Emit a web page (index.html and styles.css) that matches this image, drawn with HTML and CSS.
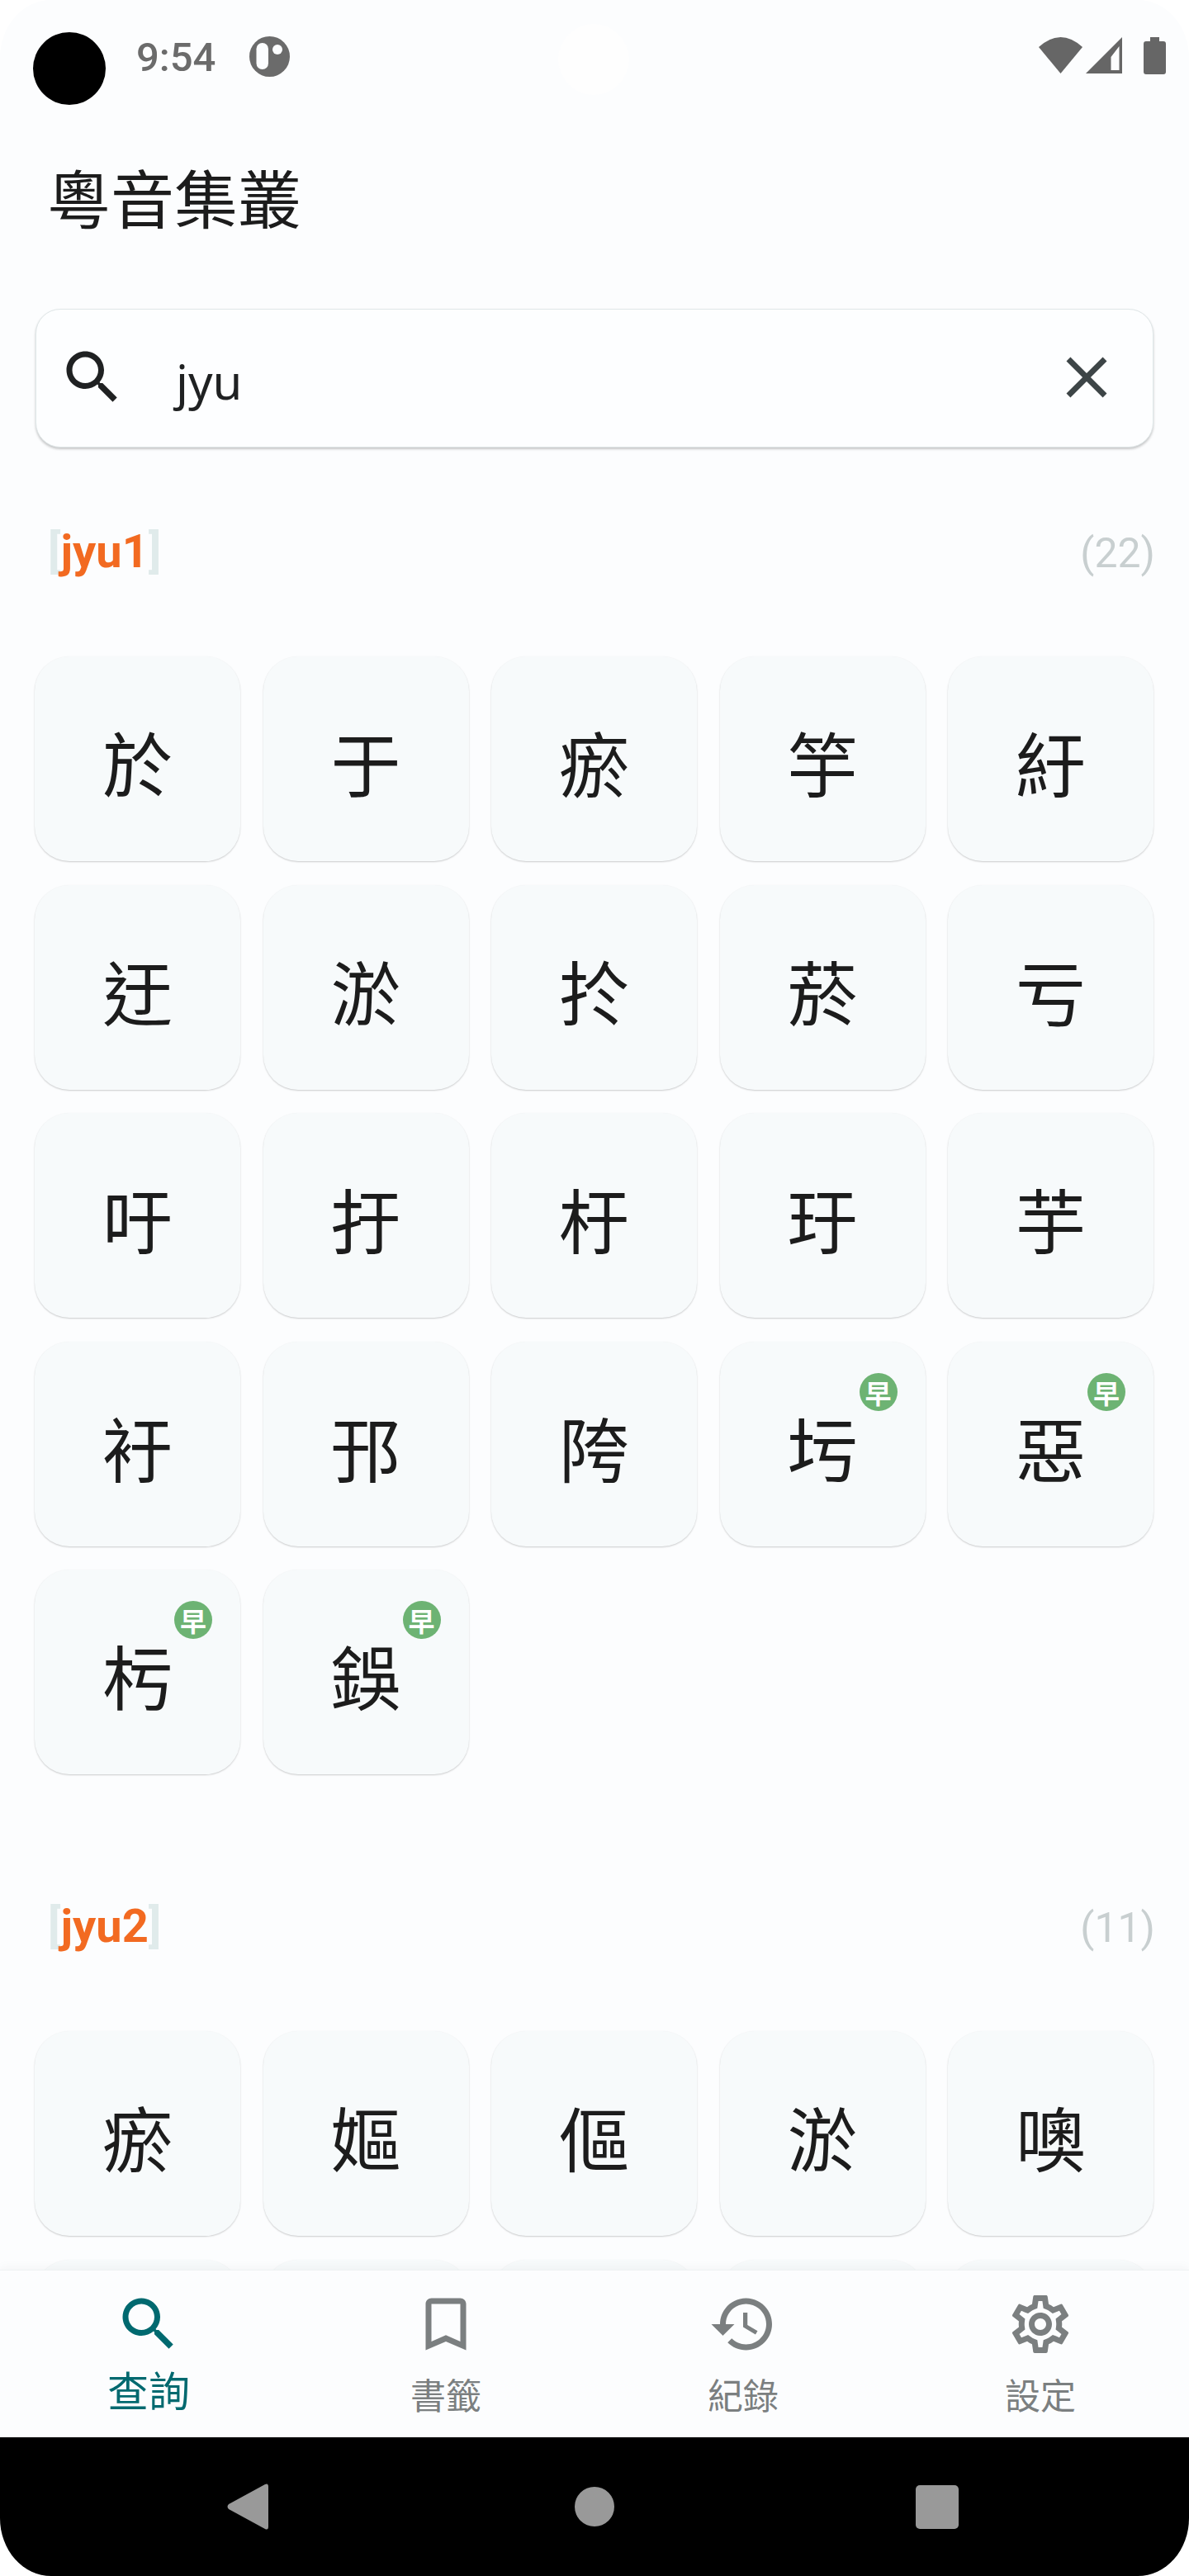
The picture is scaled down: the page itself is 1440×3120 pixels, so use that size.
FILE: index.html
```html
<!DOCTYPE html>
<html>
<head>
	<title>粵音集叢</title>
	<meta charset="utf-8">
	<link rel="stylesheet" href="styles.css">
</head>
<body>
<div id="screen">

	<div class="status">
		<div class="status-hole"></div>
		<span class="status-time">9:54</span>
		<svg class="status-app" width="49" height="49" viewBox="0 0 49 49">
			<circle cx="24.5" cy="24.5" r="24.5" fill="#6b6b6b"/>
			<rect x="8.5" y="8" width="14.5" height="32" rx="7.2" fill="#fcfdff"/>
			<circle cx="34" cy="16" r="6" fill="#fcfdff"/>
		</svg>
		<div class="status-camera"></div>
		<div class="status-right">
			<svg width="53" height="44" viewBox="0 0 53 44"><path d="M0 12Q26.5 -12 53 12L26.5 44Z" fill="#666"/></svg>
			<svg width="44" height="44" viewBox="0 0 44 44"><path fill-rule="evenodd" d="M0 44L44 0V44ZM30.5 40H40.5V11L30.5 24Z" fill="#666"/></svg>
			<svg class="status-battery" width="27" height="45" viewBox="0 0 27 45"><path d="M8 0H19V5H24Q27 5 27 8V42Q27 45 24 45H3Q0 45 0 42V8Q0 5 3 5H8Z" fill="#666"/></svg>
		</div>
	</div>

	<h1>粵音集叢</h1>

	<div class="search">
		<svg class="search-icon" width="84" height="84" viewBox="0 0 24 24"><path d="M15.5 14h-.79l-.28-.27C15.41 12.59 16 11.11 16 9.5 16 5.91 13.09 3 9.5 3S3 5.91 3 9.5 5.91 16 9.5 16c1.61 0 3.09-.59 4.23-1.57l.27.28v.79l5 4.99L20.49 19l-4.99-5zm-6 0C7.01 14 5 11.99 5 9.5S7.01 5 9.5 5 14 7.01 14 9.5 11.99 14 9.5 14z" fill="#1f2122"/></svg>
		<span class="search-text">jyu</span>
		<svg class="search-clear" width="84" height="84" viewBox="0 0 24 24"><path d="M19 6.41L17.59 5 12 10.59 6.41 5 5 6.41 10.59 12 5 17.59 6.41 19 12 13.41 17.59 19 19 17.59 13.41 12z" fill="#3d4547"/></svg>
	</div>

	<div class="results">
		<div class="section">
			<div class="section-head">
				<span class="syllable"><i>[</i>jyu1<i>]</i></span>
				<span class="count">(22)</span>
			</div>
			<div class="grid">
				<div class="card">於</div>
				<div class="card">于</div>
				<div class="card">瘀</div>
				<div class="card">竽</div>
				<div class="card">紆</div>
				<div class="card">迂</div>
				<div class="card">淤</div>
				<div class="card">扵</div>
				<div class="card">菸</div>
				<div class="card">亏</div>
				<div class="card">吁</div>
				<div class="card">扜</div>
				<div class="card">杅</div>
				<div class="card">玗</div>
				<div class="card">芋</div>
				<div class="card">衧</div>
				<div class="card">邘</div>
				<div class="card">陓</div>
				<div class="card">圬<span class="badge">早</span></div>
				<div class="card">惡<span class="badge">早</span></div>
				<div class="card">杇<span class="badge">早</span></div>
				<div class="card">鋘<span class="badge">早</span></div>
			</div>
		</div>

		<div class="section section-next">
			<div class="section-head">
				<span class="syllable"><i>[</i>jyu2<i>]</i></span>
				<span class="count">(11)</span>
			</div>
			<div class="grid">
				<div class="card">瘀</div>
				<div class="card">嫗</div>
				<div class="card">傴</div>
				<div class="card">淤</div>
				<div class="card">噢</div>
				<div class="card"></div>
				<div class="card"></div>
				<div class="card"></div>
				<div class="card"></div>
				<div class="card"></div>
			</div>
		</div>
	</div>

	<div class="nav">
		<div class="nav-item active">
			<svg width="84" height="84" viewBox="0 0 24 24"><path d="M15.5 14h-.79l-.28-.27C15.41 12.59 16 11.11 16 9.5 16 5.91 13.09 3 9.5 3S3 5.91 3 9.5 5.91 16 9.5 16c1.61 0 3.09-.59 4.23-1.57l.27.28v.79l5 4.99L20.49 19l-4.99-5zm-6 0C7.01 14 5 11.99 5 9.5S7.01 5 9.5 5 14 7.01 14 9.5 11.99 14 9.5 14z"/></svg>
			<span>查詢</span>
		</div>
		<div class="nav-item">
			<svg width="84" height="84" viewBox="0 0 24 24"><path d="M17 3H7c-1.1 0-2 .9-2 2v16l7-3 7 3V5c0-1.1-.9-2-2-2zm0 15l-5-2.18L7 18V5h10v13z"/></svg>
			<span>書籤</span>
		</div>
		<div class="nav-item">
			<svg width="84" height="84" viewBox="0 0 24 24"><path d="M13 3c-4.97 0-9 4.03-9 9H1l3.89 3.89.07.14L9 12H6c0-3.87 3.13-7 7-7s7 3.13 7 7-3.13 7-7 7c-1.93 0-3.68-.79-4.94-2.06l-1.42 1.42C8.27 19.99 10.51 21 13 21c4.97 0 9-4.03 9-9s-4.03-9-9-9zm-1 5v5l4.28 2.54.72-1.21-3.5-2.08V8H12z"/></svg>
			<span>紀錄</span>
		</div>
		<div class="nav-item">
			<svg width="84" height="84" viewBox="0 0 24 24"><path d="M19.43 12.98c.04-.32.07-.64.07-.98 0-.34-.03-.66-.07-.98l2.11-1.65c.19-.15.24-.42.12-.64l-2-3.46c-.09-.16-.26-.25-.44-.25-.06 0-.12.01-.17.03l-2.49 1c-.52-.4-1.08-.73-1.69-.98l-.38-2.65C14.46 2.18 14.25 2 14 2h-4c-.25 0-.46.18-.49.42l-.38 2.65c-.61.25-1.17.59-1.69.98l-2.49-1c-.06-.02-.12-.03-.18-.03-.17 0-.34.09-.43.25l-2 3.46c-.13.22-.07.49.12.64l2.11 1.65c-.04.32-.07.65-.07.98 0 .33.03.66.07.98l-2.11 1.65c-.19.15-.24.42-.12.64l2 3.46c.09.16.26.25.44.25.06 0 .12-.01.17-.03l2.49-1c.52.4 1.08.73 1.69.98l.38 2.65c.03.24.24.42.49.42h4c.25 0 .46-.18.49-.42l.38-2.65c.61-.25 1.17-.59 1.69-.98l2.49 1c.06.02.12.03.18.03.17 0 .34-.09.43-.25l2-3.46c.12-.22.07-.49-.12-.64l-2.11-1.65zm-1.98-1.71c.04.31.05.52.05.73 0 .21-.02.43-.05.73l-.14 1.13.89.7 1.08.84-.7 1.21-1.27-.51-1.04-.42-.9.68c-.43.32-.84.56-1.25.73l-1.06.43-.16 1.13-.2 1.35h-1.4l-.19-1.35-.16-1.13-1.06-.43c-.43-.18-.83-.41-1.23-.71l-.91-.7-1.06.43-1.27.51-.7-1.21 1.08-.84.89-.7-.14-1.13c-.03-.31-.05-.54-.05-.74s.02-.43.05-.73l.14-1.13-.89-.7-1.08-.84.7-1.21 1.27.51 1.04.42.9-.68c.43-.32.84-.56 1.25-.73l1.06-.43.16-1.13.2-1.35h1.39l.19 1.35.16 1.13 1.06.43c.43.18.83.41 1.23.71l.91.7 1.06-.43 1.27-.51.7 1.21-1.07.85-.89.7.14 1.13zM12 8c-2.21 0-4 1.79-4 4s1.79 4 4 4 4-1.79 4-4-1.79-4-4-4zm0 6c-1.1 0-2-.9-2-2s.9-2 2-2 2 .9 2 2-.9 2-2 2z"/></svg>
			<span>設定</span>
		</div>
	</div>

	<div class="android-bar">
		<svg width="50" height="56" viewBox="0 0 50 56"><path d="M46 1Q50 -1 50 4V52Q50 57 46 55L2 31Q-1 28 2 25Z" fill="#999"/></svg>
		<div class="android-home"></div>
		<div class="android-recent"></div>
	</div>

</div>
</body>
</html>
```

FILE: styles.css
```css
body {
	margin: 0;
	background: #fff;
	font-family: "Noto Sans CJK TC", "Noto Sans", sans-serif;
}

#screen {
	width: 1440px;
	height: 3120px;
	display: flex;
	flex-direction: column;
	overflow: hidden;
	position: relative;
	background: #fcfdfe;
	border-radius: 62px / 70px;
}

.status {
	height: 181px;
	box-sizing: border-box;
	padding: 39px 28px 0 40px;
	display: flex;
	align-items: flex-start;
	flex-shrink: 0;
}
.status-hole {
	width: 88px;
	height: 88px;
	border-radius: 50%;
	background: #000;
}
.status-time {
	margin-left: 37px;
	margin-top: 3px;
	font-family: Roboto, sans-serif;
	font-size: 49px;
	line-height: 56px;
	font-weight: 500;
	color: #6b6b6b;
}
.status-app {
	margin-left: 41px;
	margin-top: 5px;
}
.status-camera {
	position: absolute;
	left: 676px;
	top: 29px;
	width: 86px;
	height: 86px;
	border-radius: 50%;
	background: #fefefe;
}
.status-right {
	margin-left: auto;
	margin-top: 6px;
	display: flex;
	gap: 4px;
}
.status-battery {
	margin-left: 22px;
}

h1 {
	margin: 0;
	padding-left: 57px;
	font-size: 77px;
	line-height: 113px;
	font-weight: normal;
	color: #1c1c1c;
	flex-shrink: 0;
}

.search {
	margin: 80px 43px 0 43px;
	height: 168px;
	box-sizing: border-box;
	flex-shrink: 0;
	display: flex;
	align-items: center;
	padding: 0 38px 0 26px;
	background: #fdfeff;
	border: 1px solid #e0e7e8;
	border-radius: 30px;
	box-shadow: 0 2px 3px rgba(0,0,0,0.22);
}
.search-icon {
	margin-top: -2px;
}
.search-text {
	margin-left: 59px;
	margin-top: 6px;
	font-family: "Noto Sans", sans-serif;
	font-size: 58px;
	color: #1f2122;
}
.search-clear {
	margin-left: auto;
	margin-top: -3px;
}

.results {
	flex: 1;
	min-height: 0;
	overflow: hidden;
	padding-top: 99px;
}
.section-next {
	margin-top: 157px;
}
.section-head {
	display: flex;
	justify-content: space-between;
	padding: 0 41px 0 58px;
	height: 54px;
	line-height: 54px;
	margin-bottom: 100px;
	font-family: Roboto, sans-serif;
}
.syllable {
	font-size: 56px;
	font-weight: bold;
	color: #f26a21;
}
.syllable i {
	font-style: normal;
	font-weight: bold;
	color: #e0ebeb;
}
.count {
	margin-top: 2px;
	font-size: 50px;
	font-weight: normal;
	color: #c8cfd0;
}

.grid {
	display: grid;
	grid-template-columns: repeat(5, 249px);
	grid-auto-rows: 248px;
	gap: 28.5px 27.5px;
	padding-left: 42px;
}
.card {
	position: relative;
	display: flex;
	align-items: center;
	justify-content: center;
	padding-top: 5px;
	box-sizing: border-box;
	font-size: 85px;
	color: #1c1c1c;
	background: #f7fafb;
	border-radius: 42px;
	box-shadow: 0 1px 2px rgba(0,0,0,0.2);
}
.badge {
	position: absolute;
	top: 38px;
	right: 34px;
	width: 46px;
	height: 46px;
	border-radius: 50%;
	background: #6db373;
	color: #fff;
	font-size: 32px;
	font-weight: bold;
	line-height: 46px;
	text-align: center;
}

.nav {
	height: 203px;
	box-sizing: border-box;
	flex-shrink: 0;
	display: flex;
	background: #fcfdfe;
	border-top: 1px solid #eff2f3;
	box-shadow: 0 -4px 10px rgba(0,0,0,0.03);
	position: relative;
}
.nav-item {
	flex: 1;
	display: flex;
	flex-direction: column;
	align-items: center;
	padding-top: 23px;
	color: #7b7f80;
	fill: #7b7f80;
	font-size: 43px;
	line-height: 60px;
}
.nav-item span {
	margin-top: 12px;
}
.nav-item.active {
	color: #00696f;
	fill: #00696f;
	font-size: 50px;
}
.nav-item.active span {
	margin-top: 6px;
}

.android-bar {
	height: 168px;
	flex-shrink: 0;
	background: #000;
	display: flex;
	align-items: center;
	padding: 0 279px 0 275px;
	justify-content: space-between;
	box-sizing: border-box;
}
.android-home {
	margin-left: 6px;
	width: 48px;
	height: 48px;
	border-radius: 50%;
	background: #999;
}
.android-recent {
	width: 52px;
	height: 53px;
	border-radius: 5px;
	background: #999;
}
```
